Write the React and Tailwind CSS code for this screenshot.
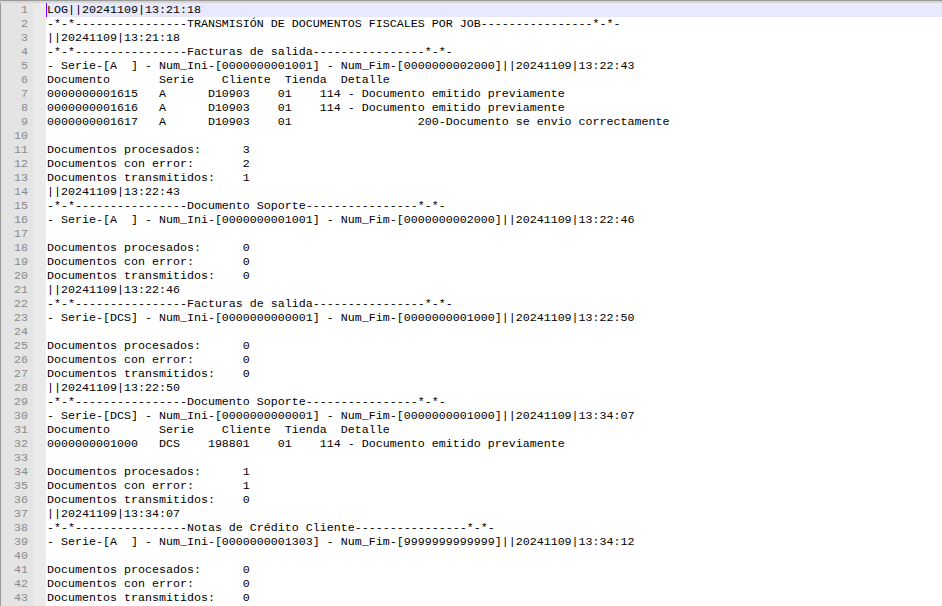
const lines = [
  'LOG||20241109|13:21:18',
  '-*-*----------------TRANSMISIÓN DE DOCUMENTOS FISCALES POR JOB----------------*-*-',
  '||20241109|13:21:18',
  '-*-*----------------Facturas de salida----------------*-*-',
  '- Serie-[A  ] - Num_Ini-[0000000001001] - Num_Fim-[0000000002000]||20241109|13:22:43',
  'Documento       Serie    Cliente  Tienda  Detalle',
  '0000000001615   A      D10903    01    114 - Documento emitido previamente',
  '0000000001616   A      D10903    01    114 - Documento emitido previamente',
  '0000000001617   A      D10903    01                  200-Documento se envio correctamente',
  '',
  'Documentos procesados:      3',
  'Documentos con error:       2',
  'Documentos transmitidos:    1',
  '||20241109|13:22:43',
  '-*-*----------------Documento Soporte----------------*-*-',
  '- Serie-[A  ] - Num_Ini-[0000000001001] - Num_Fim-[0000000002000]||20241109|13:22:46',
  '',
  'Documentos procesados:      0',
  'Documentos con error:       0',
  'Documentos transmitidos:    0',
  '||20241109|13:22:46',
  '-*-*----------------Facturas de salida----------------*-*-',
  '- Serie-[DCS] - Num_Ini-[0000000000001] - Num_Fim-[0000000001000]||20241109|13:22:50',
  '',
  'Documentos procesados:      0',
  'Documentos con error:       0',
  'Documentos transmitidos:    0',
  '||20241109|13:22:50',
  '-*-*----------------Documento Soporte----------------*-*-',
  '- Serie-[DCS] - Num_Ini-[0000000000001] - Num_Fim-[0000000001000]||20241109|13:34:07',
  'Documento       Serie    Cliente  Tienda  Detalle',
  '0000000001000   DCS    198801    01    114 - Documento emitido previamente',
  '',
  'Documentos procesados:      1',
  'Documentos con error:       1',
  'Documentos transmitidos:    0',
  '||20241109|13:34:07',
  '-*-*----------------Notas de Crédito Cliente----------------*-*-',
  '- Serie-[A  ] - Num_Ini-[0000000001303] - Num_Fim-[9999999999999]||20241109|13:34:12',
  '',
  'Documentos procesados:      0',
  'Documentos con error:       0',
  'Documentos transmitidos:    0',
];

export default function App() {
  return (
    <div className="w-[942px] h-[606px] overflow-hidden bg-white flex flex-col">
      {/* top frame edge */}
      <div className="h-[3px] border-t border-[#9a9a9a] bg-[#d6d6d6] shrink-0" />

      <div className="flex flex-1 min-h-0">
        {/* gutter: line numbers + margin */}
        <div className="flex shrink-0 border-l border-[#9a9a9a]">
          <div className="w-[32px] bg-[#e4e4e4] font-['Liberation_Mono',monospace] text-[11.67px] leading-[14px] text-[#8a8a8a] text-right pr-[5px]">
            {lines.map((_, i) => (
              <div key={i} className="h-[14px]">{i + 1}</div>
            ))}
          </div>
          <div className="w-[13px] bg-[#ebebeb]" />
        </div>

        {/* editor text */}
        <div className="flex-1 font-['Liberation_Mono',monospace] text-[11.67px] leading-[14px] text-black">
          {lines.map((line, i) => (
            <div
              key={i}
              className={`h-[14px] whitespace-pre ${i === 0 ? 'bg-[#e8e8ff] border-l border-[#8000ff]' : 'pl-px'}`}
            >
              {line}
            </div>
          ))}
        </div>
      </div>
    </div>
  );
}
